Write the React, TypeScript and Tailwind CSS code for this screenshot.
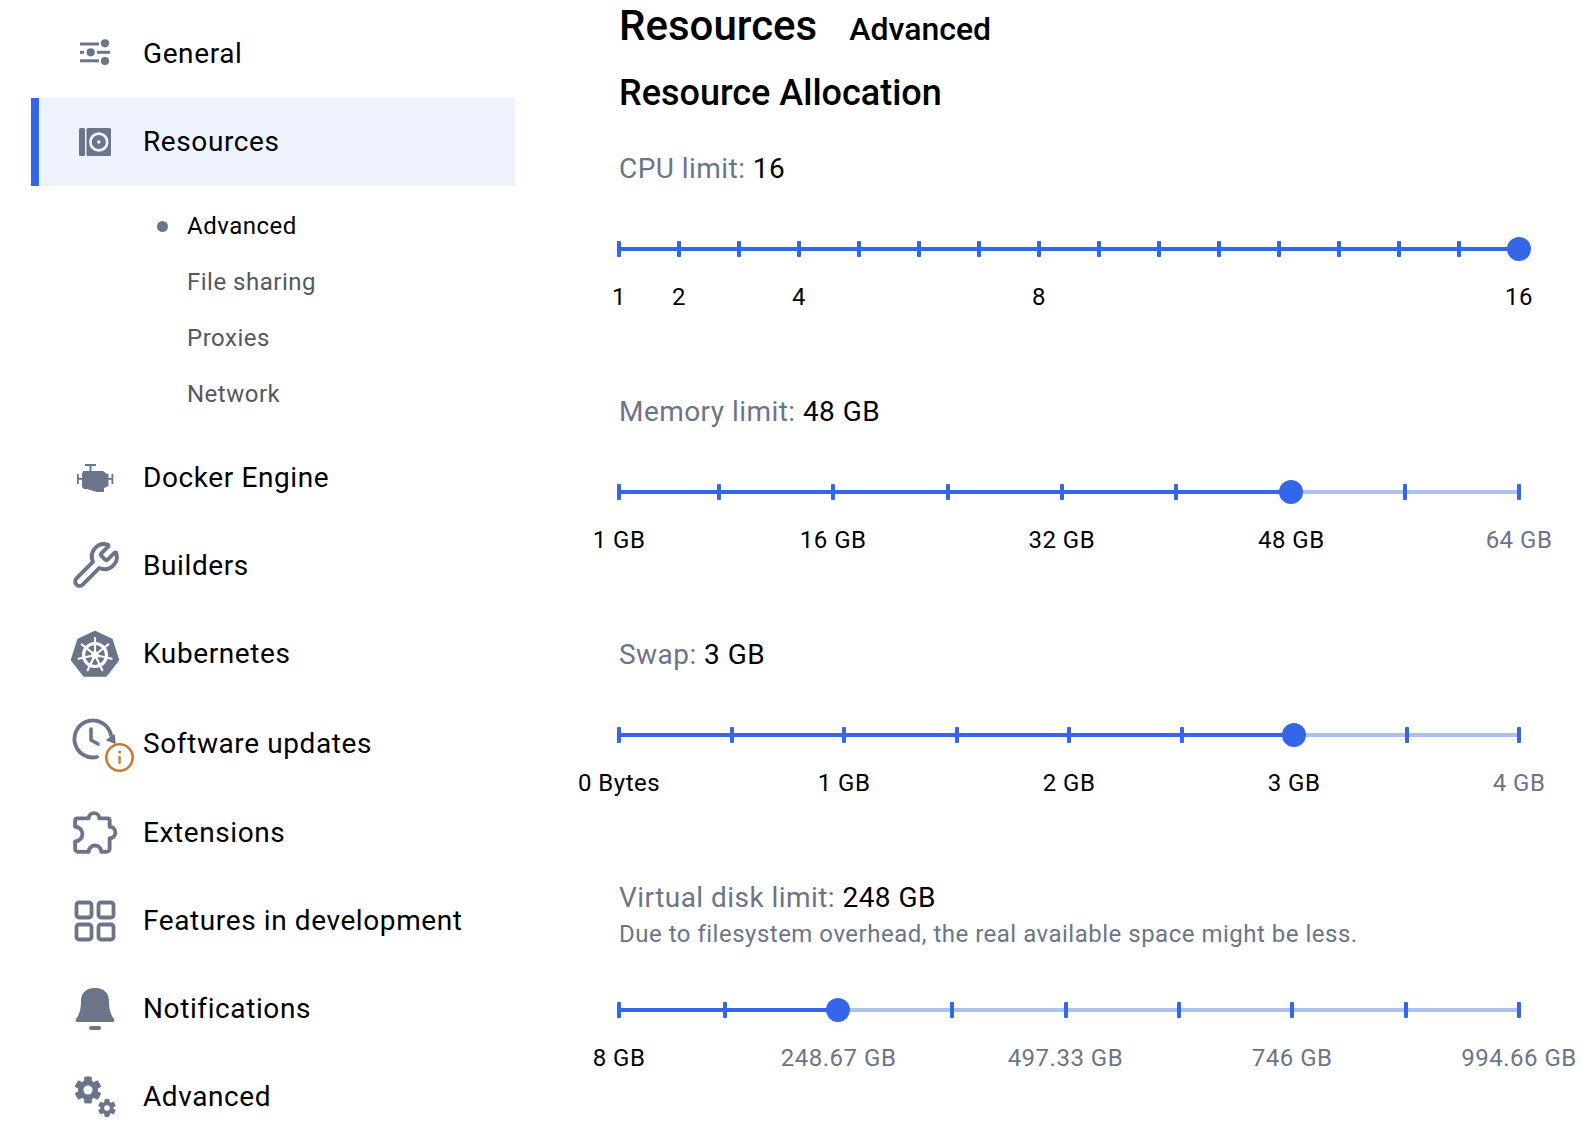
import React from "react";
import { Wrench } from "lucide-react";

const C = "#6b7589";

function GeneralIcon() {
  return (
    <svg width="32" height="28" viewBox="0 0 32 28" fill={C} className="overflow-visible">
      <rect x="1" y="2.5" width="19" height="3" />
      <circle cx="26" cy="3.3" r="4.1" />
      <rect x="1" y="10.8" width="4" height="3" />
      <circle cx="11.7" cy="12.3" r="4.1" />
      <rect x="18" y="10.8" width="13" height="3" />
      <rect x="1" y="19.3" width="19" height="3" />
      <circle cx="26" cy="21" r="4.1" />
    </svg>
  );
}
function ResourcesIcon() {
  return (
    <svg width="34" height="30" viewBox="0 0 34 30">
      <rect x="1" y="1" width="6" height="28" rx="1.5" fill={C} />
      <rect x="8.5" y="1" width="24.5" height="28" rx="1.5" fill={C} />
      <circle cx="20.8" cy="15" r="8.4" fill="none" stroke="#eef2fc" strokeWidth="2.8" />
      <circle cx="20.8" cy="15" r="1.8" fill="#eef2fc" />
    </svg>
  );
}
function EngineIcon() {
  return (
    <svg width="38" height="30" viewBox="0 0 38 30" fill={C} className="translate-y-[1px]">
      <rect x="9" y="0" width="11" height="2" />
      <rect x="13.5" y="1" width="2" height="7" />
      <path d="M7 7h20l4 3h1.5v12l-4.500 2v4h-7L11 25H8l-2-2V10z" />
      <rect x="1" y="10" width="1.800" height="10" />
      <rect x="1" y="14" width="6" height="1.800" />
      <rect x="35.500" y="10" width="1.800" height="10" />
      <rect x="31" y="14" width="5" height="1.800" />
    </svg>
  );
}
function KubeIcon() {
  const spokes = [0, 51.4, 102.8, 154.3, 205.7, 257.1, 308.6];
  return (
    <svg width="50" height="48" viewBox="0 0 50 48">
      <path d="M25 1.5 42 9.5 48.5 30 36 46H14L1.5 30 8 9.5Z" fill={C} stroke={C} strokeWidth="1.5" strokeLinejoin="round" />
      <circle cx="25" cy="25" r="11.5" fill="none" stroke="#fff" strokeWidth="3.2" />
      <circle cx="25" cy="25" r="3.8" fill="#fff" />
      {spokes.map((a) => (
        <g key={a} transform={`rotate(${a} 25 25)`}>
          <line x1="25" y1="25" x2="25" y2="8" stroke="#fff" strokeWidth="2.1" strokeLinecap="round" />
        </g>
      ))}
    </svg>
  );
}
function UpdateIcon() {
  return (
    <svg width="66" height="56" viewBox="0 0 66 56" fill="none">
      <path d="M41 17A18.5 18.5 0 1 0 27 39" stroke={C} strokeWidth="3.8" strokeLinecap="round" />
      <path d="M21 11v11l7 4" stroke={C} strokeWidth="3.6" strokeLinecap="round" strokeLinejoin="round" />
      <path d="M37 22l7-5 1 8z" fill={C} stroke={C} strokeWidth="1.5" strokeLinejoin="round" />
      <circle cx="49.5" cy="39.5" r="13.2" fill="#fff" stroke="#cf7b2c" strokeWidth="2.6" />
      <rect x="48.4" y="38" width="2.4" height="8" rx="1" fill="#cf7b2c" />
      <circle cx="49.6" cy="34" r="1.5" fill="#cf7b2c" />
    </svg>
  );
}
function PuzzleIcon() {
  return (
    <svg width="46" height="46" viewBox="0 0 44 44" fill="none" stroke={C} strokeWidth="3.7" strokeLinejoin="round">
      <path d="M16 8a5 5 0 1 1 10 0h8a2 2 0 0 1 2 2v6a5.5 5.5 0 1 1 0 11v10a3 3 0 0 1-3 3h-5a6 6 0 0 0-12 0H6a3 3 0 0 1-3-3v-7a7 7 0 0 0 0-14v-6a2 2 0 0 1 2-2Z" />
    </svg>
  );
}
function GridIcon() {
  return (
    <svg width="42" height="42" viewBox="0 0 42 42" fill="none" stroke={C} strokeWidth="3.8">
      <rect x="2.5" y="2.5" width="15" height="15" rx="2.5" />
      <rect x="24.5" y="2.5" width="15" height="15" rx="2.5" />
      <rect x="2.5" y="24.5" width="15" height="15" rx="2.5" />
      <rect x="24.5" y="24.5" width="15" height="15" rx="2.5" />
    </svg>
  );
}
function BellIcon() {
  return (
    <svg width="42" height="44" viewBox="0 0 42 44" fill={C}>
      <path d="M21 1C11 1 7 7 7 14c0 9-2 14-5 18-1 2 0 3 2 3h34c2 0 3-1 2-3-3-4-5-9-5-18 0-7-4-13-14-13z" />
      <rect x="15" y="39" width="12" height="4" rx="2" />
    </svg>
  );
}
function Gear({ cx, cy, r, hole }: { cx: number; cy: number; r: number; hole: number }) {
  const a = [0, 60, 120, 180, 240, 300];
  return (
    <g>
      {a.map((d) => (
        <rect key={d} x={cx - r * 0.36} y={cy - r * 1.32} width={r * 0.72} height={r * 2.64} rx={r * 0.1} transform={`rotate(${d} ${cx} ${cy})`} fill={C} />
      ))}
      <circle cx={cx} cy={cy} r={r} fill={C} />
      <circle cx={cx} cy={cy} r={hole} fill="#fff" />
    </g>
  );
}
function GearsIcon() {
  return (
    <svg width="42" height="42" viewBox="0 0 42 42">
      <Gear cx={14} cy={14} r={10} hole={4.6} />
      <Gear cx={33} cy={32} r={6.6} hole={2.8} />
    </svg>
  );
}

function Row({ icon, label, active }: { icon: React.ReactNode; label: string; active?: boolean }) {
  return (
    <div className={`flex h-[88px] items-center border-l-[8px] ${active ? "border-[#3366e8] bg-[#eef2fc]" : "border-transparent"}`}>
      <div className="ml-[23px] flex h-[56px] w-[66px] shrink-0 items-center justify-center">{icon}</div>
      <span className="ml-[15px] text-[28px] leading-none tracking-[0.6px] text-black">{label}</span>
    </div>
  );
}

type Mark = { p: number; l: string };
type SliderProps = {
  name: string;
  value: string;
  note?: string;
  thumb: number;
  ticks: number[];
  marks: Mark[];
};

function Slider({ name, value, note, thumb, ticks, marks }: SliderProps) {
  return (
    <div className="w-[900px]">
      <div className="text-[28px] leading-[36px] tracking-[0.45px]">
        <span className="text-[#6b7589]">{name}: </span>
        <span className="text-black">{value}</span>
      </div>
      {note && <div className="mt-[2px] text-[24px] leading-[32px] tracking-[0.5px] text-[#6b7589]">{note}</div>}
      <div className={`relative h-[20px] ${note ? "mt-[50px]" : "mt-[52px]"}`}>
        <div className="absolute left-0 right-0 top-[8px] h-[4px] bg-[#adc0f2]" />
        <div className="absolute left-0 top-[8px] h-[4px] bg-[#3366e8]" style={{ width: `${thumb}%` }} />
        {ticks.map((t) => (
          <div key={t} className="absolute top-[2px] h-[16px] w-[4px] -translate-x-1/2 rounded-[1px] bg-[#3366e8]" style={{ left: `${t}%` }} />
        ))}
        <div className="absolute top-[-2px] h-[24px] w-[24px] -translate-x-1/2 rounded-full bg-[#3366e8]" style={{ left: `${thumb}%` }} />
      </div>
      <div className="relative mt-[24px] h-[28px]">
        {marks.map((m) => (
          <span
            key={m.l}
            className={`absolute -translate-x-1/2 whitespace-nowrap text-[24px] leading-[28px] tracking-[0.5px] ${m.p <= thumb ? "text-black" : "text-[#6b7589]"}`}
            style={{ left: `${m.p}%` }}
          >
            {m.l}
          </span>
        ))}
      </div>
    </div>
  );
}

const even = (n: number) => Array.from({ length: n + 1 }, (_, i) => (i * 100) / n);

export default function App() {
  const mem = [0, ...Array.from({ length: 8 }, (_, i) => (((i + 1) * 8 - 1) / 63) * 100)];
  const disk = [0, 11.8, 24.4, 37, 49.7, 62.2, 74.8, 87.4, 100];
  return (
    <div className="flex h-[1136px] w-[1584px] overflow-hidden bg-white font-['Roboto',sans-serif]">
      <aside className="ml-[31px] w-[484px] shrink-0 pt-[10px]">
        <Row icon={<GeneralIcon />} label="General" />
        <Row icon={<ResourcesIcon />} label="Resources" active />
        <div className="py-[12px] pl-[126px] text-[24px] tracking-[0.5px]">
          <div className="relative flex h-[56px] items-center text-black">
            <span className="absolute left-0 h-[11px] w-[11px] rounded-full bg-[#6b7589]" />
            <span className="ml-[30px]">Advanced</span>
          </div>
          <div className="flex h-[56px] items-center pl-[30px] text-[#55585f]">File sharing</div>
          <div className="flex h-[56px] items-center pl-[30px] text-[#55585f]">Proxies</div>
          <div className="flex h-[56px] items-center pl-[30px] text-[#55585f]">Network</div>
        </div>
        <Row icon={<EngineIcon />} label="Docker Engine" />
        <Row icon={<Wrench size={50} color={C} strokeWidth={1.9} className="translate-x-[1px] -translate-y-[1px]" />} label="Builders" />
        <Row icon={<KubeIcon />} label="Kubernetes" />
        <div className="mt-[2px]">
          <Row icon={<div className="translate-x-[8px] translate-y-[2px]"><UpdateIcon /></div>} label="Software updates" />
        </div>
        <div className="mt-[1px]">
          <Row icon={<PuzzleIcon />} label="Extensions" />
          <Row icon={<GridIcon />} label="Features in development" />
          <Row icon={<BellIcon />} label="Notifications" />
          <Row icon={<GearsIcon />} label="Advanced" />
        </div>
      </aside>
      <main className="ml-[104px] flex-1">
        <div className="flex items-baseline pt-[1px]">
          <h1 className="text-[42px] font-medium leading-[50px] text-black">Resources</h1>
          <span className="ml-[32px] text-[32px] font-medium text-black">Advanced</span>
        </div>
        <h2 className="mt-[18px] text-[36px] font-medium leading-[44px] text-black">Resource Allocation</h2>
        <div className="mt-[36px] flex flex-col gap-[83px]">
          <Slider name="CPU limit" value="16" thumb={100} ticks={even(15)} marks={[{ p: 0, l: "1" }, { p: 6.667, l: "2" }, { p: 20, l: "4" }, { p: 46.667, l: "8" }, { p: 100, l: "16" }]} />
          <Slider name="Memory limit" value="48 GB" thumb={74.7} ticks={mem} marks={[{ p: 0, l: "1 GB" }, { p: 23.8, l: "16 GB" }, { p: 49.2, l: "32 GB" }, { p: 74.7, l: "48 GB" }, { p: 100, l: "64 GB" }]} />
          <Slider name="Swap" value="3 GB" thumb={75} ticks={even(8)} marks={[{ p: 0, l: "0 Bytes" }, { p: 25, l: "1 GB" }, { p: 50, l: "2 GB" }, { p: 75, l: "3 GB" }, { p: 100, l: "4 GB" }]} />
          <Slider name="Virtual disk limit" value="248 GB" note="Due to filesystem overhead, the real available space might be less." thumb={24.3} ticks={disk} marks={[{ p: 0, l: "8 GB" }, { p: 24.4, l: "248.67 GB" }, { p: 49.6, l: "497.33 GB" }, { p: 74.8, l: "746 GB" }, { p: 100, l: "994.66 GB" }]} />
        </div>
      </main>
    </div>
  );
}
